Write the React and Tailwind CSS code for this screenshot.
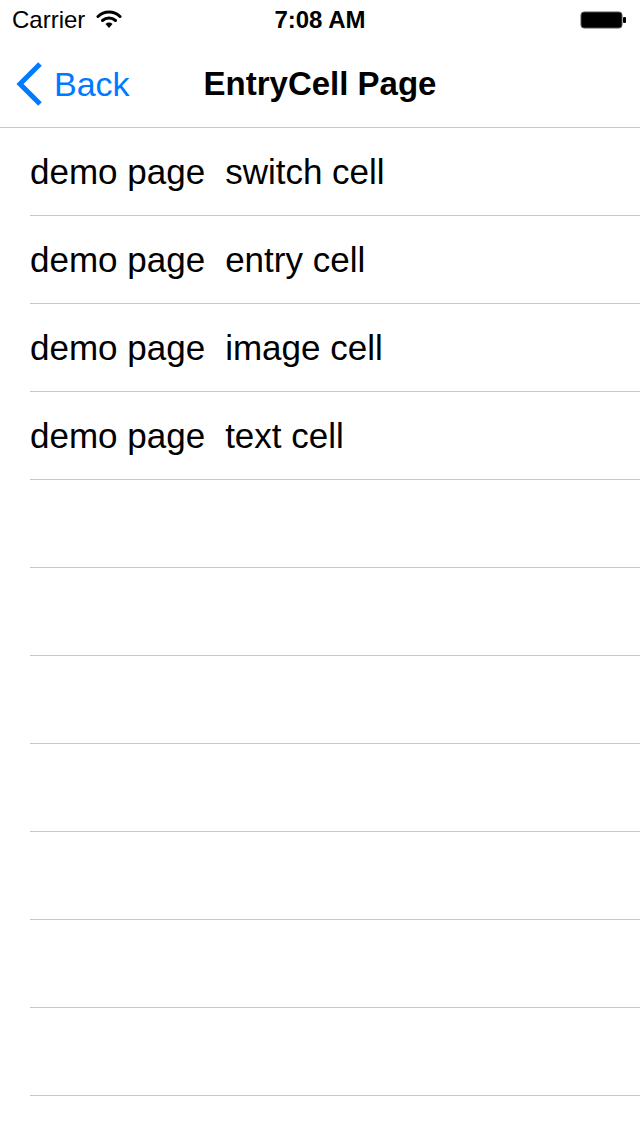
import React from 'react';

const rows = [
  { label: 'demo page', value: 'switch cell' },
  { label: 'demo page', value: 'entry cell' },
  { label: 'demo page', value: 'image cell' },
  { label: 'demo page', value: 'text cell' },
  {}, {}, {}, {}, {}, {}, {}, {},
];

function Wifi() {
  return (
    <svg width="26" height="20" viewBox="0 0 26 20">
      <path d="M2 7.5 A16 16 0 0 1 24 7.5" fill="none" stroke="#000" strokeWidth="3" strokeLinecap="round" />
      <path d="M6.5 11.5 A10 10 0 0 1 19.5 11.5" fill="none" stroke="#000" strokeWidth="3" strokeLinecap="round" />
      <path d="M13 19 L9.5 15 A5 5 0 0 1 16.5 15 Z" fill="#000" />
    </svg>
  );
}

function Battery() {
  return (
    <svg width="48" height="20" viewBox="0 0 48 20">
      <rect x="1" y="2" width="41" height="16" rx="3" fill="#000" stroke="#555" strokeWidth="1" />
      <rect x="43" y="7" width="3" height="6" rx="1" fill="#000" />
    </svg>
  );
}

export default function App() {
  return (
    <div className="h-[1136px] w-[640px] overflow-hidden bg-white text-black" style={{ fontFamily: '"Liberation Sans", Arial, sans-serif' }}>
      <div className="h-[128px] border-b border-[#c8c7cc]">
        <div className="relative flex h-[40px] items-center px-[12px]">
          <span className="text-[24px] leading-none">Carrier</span>
          <span className="ml-[11px] mt-[-2px]"><Wifi /></span>
          <span className="absolute left-0 right-0 text-center text-[24px] font-bold leading-none">7:08 AM</span>
          <span className="ml-auto mr-[0px]"><Battery /></span>
        </div>
        <div className="grid h-[87px] grid-cols-[1fr_auto_1fr] items-center">
          <div className="flex items-center pl-[15px] text-[#007aff]">
            <svg width="30" height="46" viewBox="0 0 30 46" className="mt-[1px]">
              <path d="M25 3 L5 23 L25 43" fill="none" stroke="#007aff" strokeWidth="5" strokeLinecap="butt" strokeLinejoin="miter" />
            </svg>
            <span className="ml-[9px] text-[34px] leading-none">Back</span>
          </div>
          <div className="text-[33px] font-bold leading-none">EntryCell Page</div>
          <div />
        </div>
      </div>
      {rows.map((r, i) => (
        <div key={i} className="pl-[30px]">
          <div className="flex h-[88px] items-center border-b border-[#c8c7cc] text-[35px] leading-none">
            {r.label && (
              <>
                <span>{r.label}</span>
                <span className="ml-[20px]">{r.value}</span>
              </>
            )}
          </div>
        </div>
      ))}
    </div>
  );
}
